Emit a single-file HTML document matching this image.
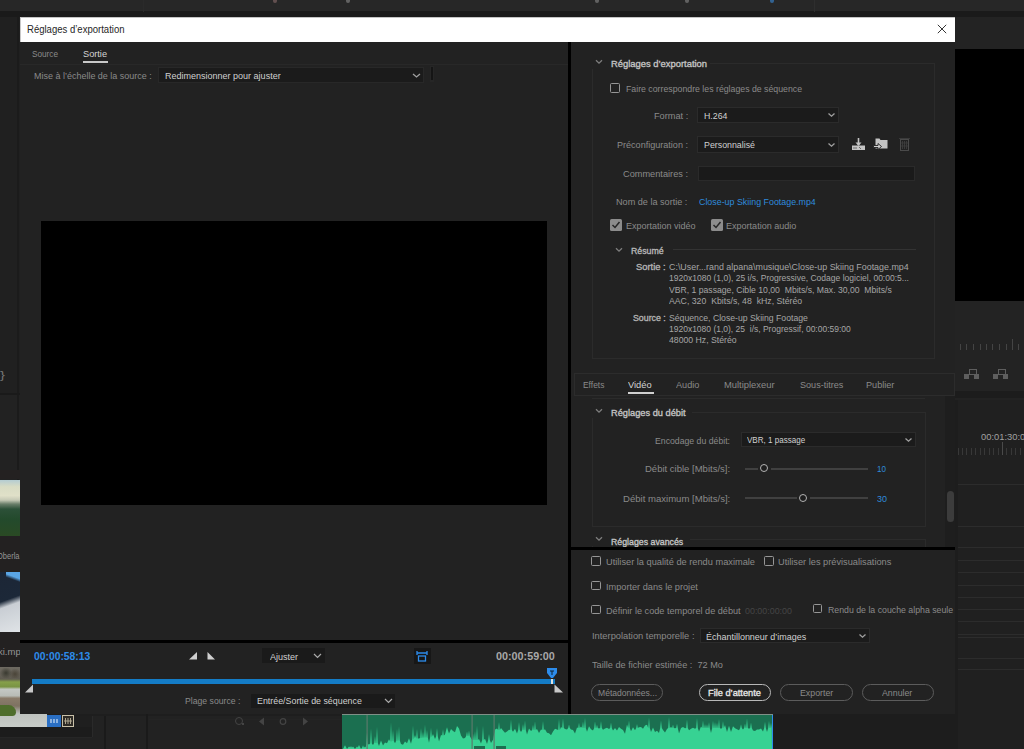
<!DOCTYPE html>
<html><head><meta charset="utf-8"><style>
html,body{margin:0;padding:0;width:1024px;height:749px;overflow:hidden;background:#222;}
body{position:relative;font-family:"Liberation Sans",sans-serif;}
body>div,body>svg{position:absolute;box-sizing:content-box;}
.t{white-space:pre;transform-origin:0 50%;}
</style></head><body>
<div style="left:0px;top:0px;width:1024px;height:749px;background:#222222;"></div>
<div style="left:0px;top:0px;width:1024px;height:11px;background:#272727;"></div>
<div style="left:0px;top:11px;width:1024px;height:6px;background:#1a1a1a;"></div>
<div style="left:143px;top:0px;width:1px;height:12px;background:#2a2a2a;"></div>
<div style="left:814px;top:0px;width:1px;height:12px;background:#2e2e2e;"></div>
<div style="left:273px;top:0;width:4px;height:3px;border-radius:0 0 2px 2px;background:#8a6a6a;opacity:.6"></div>
<div style="left:346px;top:0;width:4px;height:3px;border-radius:0 0 2px 2px;background:#8a8a8a;opacity:.6"></div>
<div style="left:595px;top:0;width:4px;height:3px;border-radius:0 0 2px 2px;background:#888;opacity:.6"></div>
<div style="left:685px;top:0;width:4px;height:3px;border-radius:0 0 2px 2px;background:#888;opacity:.6"></div>
<div style="left:770px;top:0;width:4px;height:3px;border-radius:0 0 2px 2px;background:#3a8ad8;opacity:.6"></div>
<div style="left:955px;top:17px;width:69px;height:32px;background:#232323;"></div>
<div style="left:955px;top:49px;width:69px;height:252px;background:#000000;"></div>
<div style="left:955px;top:301px;width:69px;height:91px;background:#232323;"></div>
<div style="left:955px;top:391px;width:69px;height:7px;background:#1c1c1c;"></div>
<div style="left:955px;top:400px;width:69px;height:349px;background:#202020;"></div>
<div style="left:960px;top:344px;width:1px;height:6px;background:#444444;"></div>
<div style="left:966px;top:344px;width:1px;height:6px;background:#444444;"></div>
<div style="left:973px;top:344px;width:1px;height:6px;background:#444444;"></div>
<div style="left:980px;top:344px;width:1px;height:6px;background:#444444;"></div>
<div style="left:986px;top:344px;width:1px;height:6px;background:#444444;"></div>
<div style="left:992px;top:344px;width:1px;height:6px;background:#444444;"></div>
<div style="left:999px;top:344px;width:1px;height:6px;background:#444444;"></div>
<div style="left:1006px;top:344px;width:1px;height:6px;background:#444444;"></div>
<div style="left:1012px;top:339px;width:1px;height:11px;background:#444444;"></div>
<div style="left:1018px;top:344px;width:1px;height:6px;background:#444444;"></div>
<div style="left:964px;top:369px;width:16px;height:10px;"><div style="position:absolute;left:5px;top:0;width:6px;height:4px;border:1px solid #5e5e5e"></div><div style="position:absolute;left:0;top:5px;width:5px;height:5px;background:#5e5e5e"></div><div style="position:absolute;left:10px;top:5px;width:5px;height:5px;background:#5e5e5e"></div></div>
<div style="left:993px;top:369px;width:16px;height:10px;"><div style="position:absolute;left:5px;top:0;width:6px;height:4px;border:1px solid #5e5e5e"></div><div style="position:absolute;left:0;top:5px;width:5px;height:5px;background:#5e5e5e"></div><div style="position:absolute;left:10px;top:5px;width:5px;height:5px;background:#5e5e5e"></div></div>
<div class="t" style="left:980.5px;top:429.6px;line-height:14px;font-size:9px;font-weight:400;color:#a0a0a0;transform:scaleX(1.041);">00:01:30:00</div>
<div style="left:958px;top:448px;width:1px;height:7px;background:#383838;"></div>
<div style="left:962px;top:448px;width:1px;height:7px;background:#383838;"></div>
<div style="left:966px;top:448px;width:1px;height:7px;background:#383838;"></div>
<div style="left:971px;top:448px;width:1px;height:7px;background:#383838;"></div>
<div style="left:975px;top:448px;width:1px;height:7px;background:#383838;"></div>
<div style="left:980px;top:448px;width:1px;height:7px;background:#383838;"></div>
<div style="left:984px;top:448px;width:1px;height:7px;background:#383838;"></div>
<div style="left:989px;top:448px;width:1px;height:7px;background:#383838;"></div>
<div style="left:993px;top:448px;width:1px;height:7px;background:#383838;"></div>
<div style="left:998px;top:448px;width:1px;height:7px;background:#383838;"></div>
<div style="left:1002px;top:442px;width:1px;height:13px;background:#4a4a4a;"></div>
<div style="left:1006px;top:448px;width:1px;height:7px;background:#383838;"></div>
<div style="left:1011px;top:448px;width:1px;height:7px;background:#383838;"></div>
<div style="left:1015px;top:448px;width:1px;height:7px;background:#383838;"></div>
<div style="left:1020px;top:448px;width:1px;height:7px;background:#383838;"></div>
<div style="left:1024px;top:448px;width:1px;height:7px;background:#383838;"></div>
<div style="left:958px;top:484px;width:66px;height:1px;background:#2c2c2c;"></div>
<div style="left:958px;top:526px;width:66px;height:1px;background:#2c2c2c;"></div>
<div style="left:958px;top:547px;width:66px;height:1px;background:#2c2c2c;"></div>
<div style="left:958px;top:560px;width:66px;height:1px;background:#2c2c2c;"></div>
<div style="left:958px;top:572px;width:66px;height:1px;background:#2c2c2c;"></div>
<div style="left:958px;top:585px;width:66px;height:1px;background:#2c2c2c;"></div>
<div style="left:958px;top:597px;width:66px;height:1px;background:#2c2c2c;"></div>
<div style="left:958px;top:609px;width:66px;height:1px;background:#2c2c2c;"></div>
<div style="left:958px;top:621px;width:66px;height:1px;background:#2c2c2c;"></div>
<div style="left:958px;top:634px;width:66px;height:1px;background:#2c2c2c;"></div>
<div style="left:958px;top:637px;width:66px;height:1px;background:#2c2c2c;"></div>
<div style="left:958px;top:658px;width:66px;height:1px;background:#2c2c2c;"></div>
<div style="left:958px;top:669px;width:66px;height:1px;background:#2c2c2c;"></div>
<div style="left:955px;top:400px;width:3px;height:349px;background:#1d1d1d;"></div>
<div style="left:0px;top:17px;width:20px;height:376px;background:#202020;"></div>
<div style="left:17px;top:17px;width:2px;height:697px;background:#1b1b1b;"></div>
<div style="left:0px;top:393px;width:20px;height:2px;background:#1a1a1a;"></div>
<div class="t" style="left:0.0px;top:368.9px;line-height:14px;font-size:10px;font-weight:400;color:#777;transform:scaleX(1.495);">}</div>
<div style="left:0px;top:470px;width:20px;height:9px;background:#242121;"></div>
<div style="left:0;top:480px;width:20px;height:56px;background:linear-gradient(180deg,#b4ccd2 0%,#d8dcc4 12%,#e0e0c8 28%,#c4c8b4 36%,#6a7e6a 43%,#2c5038 52%,#234a2c 70%,#2a4a24 100%)"></div>
<div style="left:0px;top:536px;width:20px;height:36px;background:#232121;"></div>
<div class="t" style="left:-3.0px;top:549.0px;line-height:14px;font-size:9px;font-weight:400;color:#959595;transform:scaleX(0.833);">Oberla</div>
<div style="left:0;top:572px;width:20px;height:60px;background:linear-gradient(160deg,#1c2636 0%,#1c2838 45%,#c9ced4 55%,#dfe3e6 100%)"><div style="position:absolute;left:6px;top:0;width:14px;height:12px;background:linear-gradient(200deg,#5aa6e6 40%,transparent 60%)"></div></div>
<div style="left:0px;top:632px;width:20px;height:35px;background:#232121;"></div>
<div class="t" style="left:-2.0px;top:644.5px;line-height:14px;font-size:9px;font-weight:400;color:#959595;transform:scaleX(1.056);">ki.mp4</div>
<div style="left:20px;top:714px;width:323px;height:35px;background:#222222;"></div>
<div style="left:20px;top:714px;width:72px;height:22px;background:#1f1f1f;"></div>
<div style="left:92px;top:714px;width:1px;height:22px;background:#2a2a2a;"></div>
<div style="left:20px;top:736px;width:73px;height:1px;background:#2a2a2a;"></div>
<div style="left:104px;top:714px;width:2px;height:35px;background:#1a1a1a;"></div>
<div style="left:149px;top:719px;width:194px;height:1px;background:#242424;"></div>
<div style="left:20px;top:714px;width:935px;height:2px;background:#1e1e1e;"></div>
<div style="left:146px;top:714px;width:2px;height:35px;background:#1a1a1a;"></div>
<div style="left:0;top:667px;width:47px;height:60px;background:linear-gradient(180deg,#6e6a62 0%,#5e5a50 20%,#86a04a 25%,#7a9444 33%,#c4c8c4 37%,#b8bcb6 48%,#8a7c6a 52%,#7e7262 65%,#bfc3bf 78%,#c8ccc8 100%)"></div>
<div style="left:0;top:668px;width:20px;height:10px;background:radial-gradient(circle at 30% 50%,#3a3a30 0%,transparent 40%),radial-gradient(circle at 75% 60%,#4a4438 0%,transparent 35%)"></div>
<div style="left:0;top:705px;width:16px;height:11px;background:#4f6e2c;border-radius:0 8px 4px 0"></div>
<div style="left:47px;top:715px;width:14px;height:12px;background:#2a6fc4;"></div>
<svg style="position:absolute;left:47px;top:715px" width="28" height="12"><path d="M4 4 L4 8 M7 4 L7 8 M10 4 L10 8" stroke="#cfe0f4" stroke-width="1.2"/><rect x="15.5" y="0.5" width="11" height="11" fill="#2e2b26" stroke="#c8c0a8"/><path d="M18.5 3 L18.5 9 M21 3 L21 9 M23.5 3 L23.5 9 M17 6 L25 6" stroke="#b0a890" stroke-width="1"/></svg>
<div style="left:0px;top:727px;width:92px;height:10px;background:#1c1c1c;"></div>
<div style="left:0px;top:737px;width:92px;height:12px;background:#222222;"></div>
<div style="left:0px;top:737px;width:92px;height:1px;background:#262626;"></div>
<div style="left:234.5px;top:717px;width:6px;height:6px;border:1.3px solid #444;border-radius:50%"></div>
<div style="left:242px;top:723px;width:2px;height:2px;background:#444;"></div>
<svg style="position:absolute;left:255px;top:716px" width="60" height="10"><path d="M9 1.5 L4 5.5 L9 9.5Z" fill="#444"/><circle cx="28" cy="5.5" r="2.8" fill="none" stroke="#444" stroke-width="1.2"/><path d="M48 1.5 L53 5.5 L48 9.5Z" fill="#444"/></svg>
<div style="left:342px;top:714px;width:431px;height:35px;background:#1b6f50;border-top:1px solid #7f9088"></div>
<svg style="position:absolute;left:0;top:0" width="1024" height="749"><path d="M343 749 L343.0 749.0 L345.0 745.3 L347.0 749.0 L349.0 746.4 L350.2 747.5 L351.0 746.0 L351.8 747.5 L352.2 747.5 L353.0 746.6 L353.8 747.5 L355.0 749.0 L356.2 747.5 L357.0 746.4 L357.8 747.5 L359.0 745.0 L361.0 749.0 L362.2 747.5 L363.0 745.2 L363.8 747.5 L364.2 747.5 L365.0 746.5 L365.8 747.5 L366.2 744.0 L367.0 732.6 L367.8 744.0 L369.0 744.6 L370.2 743.6 L371.0 728.3 L371.8 743.6 L373.0 745.1 L374.2 743.1 L375.0 735.9 L375.8 743.1 L376.2 742.9 L377.0 726.7 L377.8 742.9 L379.0 745.9 L381.0 740.6 L383.0 745.4 L385.0 742.5 L387.0 743.2 L389.0 739.3 L390.2 741.4 L391.0 722.3 L391.8 741.4 L392.2 741.1 L393.0 729.8 L393.8 741.1 L395.0 743.2 L396.2 740.7 L397.0 728.7 L397.8 740.7 L398.2 740.5 L399.0 726.3 L399.8 740.5 L401.0 743.9 L403.0 744.8 L405.0 741.6 L407.0 743.3 L409.0 738.3 L411.0 743.8 L412.2 738.9 L413.0 725.5 L413.8 738.9 L415.0 735.0 L416.2 738.5 L417.0 729.1 L417.8 738.5 L419.0 738.4 L420.2 738.1 L421.0 728.1 L421.8 738.1 L422.2 737.8 L423.0 731.8 L423.8 737.8 L424.2 737.6 L425.0 724.5 L425.8 737.6 L426.2 737.4 L427.0 730.1 L427.8 737.4 L429.0 742.7 L430.2 737.0 L431.0 727.8 L431.8 737.0 L433.0 734.0 L435.0 739.0 L436.2 736.3 L437.0 727.9 L437.8 736.3 L439.0 741.6 L441.0 735.1 L442.2 735.6 L443.0 729.3 L443.8 735.6 L445.0 734.4 L446.2 730.0 L447.0 727.3 L447.8 730.0 L449.0 733.5 L451.0 729.0 L453.0 730.9 L455.0 732.2 L457.0 726.0 L459.0 728.6 L461.0 735.4 L463.0 738.4 L465.0 737.9 L466.2 736.0 L467.0 731.5 L467.8 736.0 L468.2 736.0 L469.0 730.6 L469.8 736.0 L471.0 738.2 L472.2 740.0 L473.0 733.5 L473.8 740.0 L474.2 740.0 L475.0 731.1 L475.8 740.0 L476.2 740.0 L477.0 725.4 L477.8 740.0 L479.0 739.1 L481.0 743.5 L482.2 740.0 L483.0 725.7 L483.8 740.0 L485.0 738.8 L487.0 743.9 L488.2 740.0 L489.0 734.1 L489.8 740.0 L491.0 743.1 L493.0 739.8 L495.0 729.6 L497.0 728.5 L498.2 730.0 L499.0 722.0 L499.8 730.0 L501.0 728.0 L503.0 730.5 L505.0 732.7 L507.0 731.5 L509.0 729.7 L510.2 730.0 L511.0 719.6 L511.8 730.0 L513.0 731.8 L515.0 728.7 L517.0 733.5 L518.2 730.0 L519.0 722.1 L519.8 730.0 L521.0 732.1 L522.2 730.0 L523.0 724.1 L523.8 730.0 L524.2 730.0 L525.0 720.6 L525.8 730.0 L527.0 734.4 L529.0 728.5 L531.0 730.9 L532.2 730.0 L533.0 724.7 L533.8 730.0 L534.2 730.0 L535.0 721.2 L535.8 730.0 L537.0 728.9 L539.0 732.9 L541.0 729.6 L542.2 730.0 L543.0 720.9 L543.8 730.0 L545.0 729.3 L547.0 732.7 L549.0 733.3 L551.0 735.2 L553.0 731.6 L555.0 728.8 L557.0 729.5 L558.2 730.0 L559.0 718.8 L559.8 730.0 L561.0 727.1 L562.2 728.0 L563.0 718.3 L563.8 728.0 L565.0 729.0 L567.0 729.6 L568.2 728.0 L569.0 724.6 L569.8 728.0 L571.0 729.4 L573.0 730.0 L575.0 733.5 L577.0 727.6 L578.2 728.0 L579.0 722.8 L579.8 728.0 L581.0 726.5 L582.2 728.0 L583.0 721.5 L583.8 728.0 L584.2 728.0 L585.0 717.7 L585.8 728.0 L587.0 731.8 L589.0 726.3 L591.0 729.2 L593.0 730.4 L594.2 728.0 L595.0 721.3 L595.8 728.0 L596.2 728.0 L597.0 724.7 L597.8 728.0 L599.0 728.5 L600.2 728.0 L601.0 721.1 L601.8 728.0 L603.0 729.7 L605.0 728.6 L607.0 727.8 L609.0 728.9 L610.2 728.0 L611.0 722.6 L611.8 728.0 L613.0 730.6 L615.0 728.1 L617.0 730.6 L619.0 727.0 L621.0 728.8 L623.0 730.1 L625.0 733.8 L627.0 724.6 L628.2 728.0 L629.0 720.4 L629.8 728.0 L631.0 731.3 L633.0 727.3 L635.0 730.3 L636.2 728.0 L637.0 724.1 L637.8 728.0 L639.0 727.2 L641.0 727.1 L643.0 728.7 L645.0 725.4 L647.0 724.8 L648.2 728.0 L649.0 717.4 L649.8 728.0 L651.0 731.9 L653.0 727.4 L655.0 732.1 L657.0 730.8 L659.0 732.9 L660.2 728.0 L661.0 720.4 L661.8 728.0 L663.0 730.1 L665.0 732.5 L667.0 729.0 L668.2 728.0 L669.0 717.1 L669.8 728.0 L671.0 727.1 L672.2 728.0 L673.0 724.4 L673.8 728.0 L675.0 728.2 L676.2 728.0 L677.0 723.7 L677.8 728.0 L679.0 733.6 L681.0 728.1 L683.0 726.9 L685.0 728.3 L686.2 728.0 L687.0 719.4 L687.8 728.0 L689.0 730.3 L691.0 728.8 L693.0 727.7 L695.0 728.8 L696.2 728.0 L697.0 718.1 L697.8 728.0 L699.0 731.4 L701.0 726.6 L702.2 728.0 L703.0 720.6 L703.8 728.0 L704.2 728.0 L705.0 723.9 L705.8 728.0 L706.2 728.0 L707.0 724.3 L707.8 728.0 L708.2 728.0 L709.0 722.3 L709.8 728.0 L711.0 733.0 L712.2 728.0 L713.0 720.8 L713.8 728.0 L714.2 728.0 L715.0 722.0 L715.8 728.0 L716.2 728.0 L717.0 722.8 L717.8 728.0 L718.2 728.0 L719.0 719.1 L719.8 728.0 L721.0 728.7 L722.2 728.0 L723.0 721.0 L723.8 728.0 L725.0 725.1 L727.0 732.0 L729.0 725.7 L731.0 732.0 L733.0 726.2 L735.0 728.2 L737.0 729.3 L739.0 730.2 L740.2 728.0 L741.0 724.2 L741.8 728.0 L743.0 729.5 L744.2 728.0 L745.0 723.4 L745.8 728.0 L746.2 728.0 L747.0 718.2 L747.8 728.0 L749.0 728.8 L750.2 728.0 L751.0 722.4 L751.8 728.0 L753.0 730.6 L755.0 731.1 L757.0 729.4 L759.0 729.4 L761.0 728.4 L763.0 731.4 L764.2 728.0 L765.0 721.8 L765.8 728.0 L767.0 732.0 L768.2 728.0 L769.0 720.8 L769.8 728.0 L770.2 728.0 L771.0 722.7 L771.8 728.0 L772 749Z" fill="#37d293"/><rect x="366.5" y="715" width="1.2" height="34" fill="#5a7a6a"/><rect x="471.5" y="715" width="1.2" height="34" fill="#5a7a6a"/><rect x="493.5" y="715" width="1.2" height="34" fill="#5a7a6a"/><rect x="474" y="746" width="11" height="3" fill="#1b6f50"/><rect x="496" y="746" width="10" height="3" fill="#1b6f50"/></svg>
<div style="left:773px;top:714px;width:182px;height:35px;background:#1d1d1d;"></div>
<div style="left:772px;top:715px;width:1px;height:34px;background:#2d8ceb;"></div>
<div style="left:20px;top:17px;width:935px;height:697px;background:#232323;"></div>
<div style="left:20px;top:17px;width:935px;height:25px;background:#ffffff;"></div>
<div class="t" style="left:27.0px;top:21.9px;line-height:14px;font-size:10.5px;font-weight:400;color:#262626;transform:scaleX(0.908);">Réglages d’exportation</div>
<div style="left:20px;top:17px;width:935px;height:1px;background:#c4c4c4;"></div>
<div style="left:20px;top:17px;width:1px;height:25px;background:#c8c8c8;"></div>
<svg style="position:absolute;left:937px;top:24px" width="10" height="10"><path d="M0.8 0.8 L9.2 9.2 M9.2 0.8 L0.8 9.2" stroke="#2a2a2a" stroke-width="0.95"/></svg>
<div style="left:20px;top:42px;width:548px;height:672px;background:#222222;"></div>
<div class="t" style="left:32.0px;top:47.1px;line-height:14px;font-size:9.5px;font-weight:400;color:#8a8a8a;transform:scaleX(0.864);">Source</div>
<div class="t" style="left:83.0px;top:47.1px;line-height:14px;font-size:9.5px;font-weight:400;color:#d4d4d4;transform:scaleX(0.967);">Sortie</div>
<div style="left:83px;top:61px;width:25px;height:2px;background:#c8c8c8;"></div>
<div style="left:20px;top:64px;width:548px;height:1px;background:#282828;"></div>
<div class="t" style="left:33.6px;top:69.2px;line-height:14px;font-size:9.5px;font-weight:400;color:#8a8a8a;transform:scaleX(0.945);">Mise à l’échelle de la source :</div>
<div style="left:158px;top:67px;width:264px;height:14px;background:#1b1b1b;border:1px solid #282828"></div>
<div class="t" style="left:165.0px;top:69.2px;line-height:14px;font-size:9.5px;font-weight:400;color:#d0d0d0;transform:scaleX(0.948);">Redimensionner pour ajuster</div>
<svg style="position:absolute;left:412px;top:72.5px" width="9" height="6"><path d="M1 1 L4.5 4 L8 1" stroke="#a0a0a0" fill="none" stroke-width="1.3"/></svg>
<div style="left:430px;top:66px;width:4px;height:16px;background:#262626;"></div>
<div style="left:431px;top:67px;width:2px;height:13px;background:#151515;"></div>
<div style="left:41px;top:221px;width:506px;height:284px;background:#000000;"></div>
<div style="left:20px;top:640px;width:548px;height:3px;background:#000000;"></div>
<div class="t" style="left:34.2px;top:648.8px;line-height:14px;font-size:10.5px;font-weight:700;color:#2d8ceb;transform:scaleX(0.984);">00:00:58:13</div>
<svg style="position:absolute;left:188px;top:651px" width="30" height="10"><path d="M1 8.5 L9 8.5 L9 1Z" fill="#cfcfcf"/><path d="M19.5 1 L19.5 8.5 L27 8.5Z" fill="#cfcfcf"/></svg>
<div style="left:262px;top:648px;width:63px;height:15px;background:#1a1a1a;"></div>
<div class="t" style="left:269.5px;top:649.5px;line-height:14px;font-size:9.5px;font-weight:400;color:#d0d0d0;transform:scaleX(0.950);">Ajuster</div>
<svg style="position:absolute;left:313px;top:653px" width="9" height="6"><path d="M1 1 L4.5 4.5 L8 1" stroke="#aaa" fill="none" stroke-width="1.2"/></svg>
<div style="left:414px;top:648px;width:17px;height:16px;background:#171717"><svg style="position:absolute;left:0;top:0" width="16" height="16"><path d="M3 3 L3 7 M13 3 L13 7 M3 5 L13 5" stroke="#2d8ceb" stroke-width="1.3" fill="none"/><rect x="4.5" y="8" width="7" height="5" stroke="#2d8ceb" stroke-width="1.3" fill="none"/></svg></div>
<div class="t" style="left:496.4px;top:648.8px;line-height:14px;font-size:10.5px;font-weight:700;color:#a8a8a8;transform:scaleX(1.028);">00:00:59:00</div>
<div style="left:32px;top:679px;width:523px;height:5px;background:#147cc6;"></div>
<svg style="position:absolute;left:24px;top:684px" width="10" height="9"><path d="M1 8.5 L9 8.5 L9 0.5Z" fill="#c8c8c8"/></svg>
<svg style="position:absolute;left:554px;top:684px" width="10" height="9"><path d="M0.5 0.5 L0.5 8.5 L9 8.5Z" fill="#c8c8c8"/></svg>
<svg style="position:absolute;left:546px;top:667px" width="12" height="18"><path d="M1 1 L11 1 L11 6 L7 11 L5 11 L1 6Z" fill="#2d8ceb"/><path d="M4 4 L8 4 M6 4 L6 8" stroke="#123" stroke-width="1"/><rect x="5" y="12" width="2" height="5" fill="#e0e0e0"/></svg>
<div class="t" style="left:184.6px;top:694.2px;line-height:14px;font-size:9.5px;font-weight:400;color:#8a8a8a;transform:scaleX(0.912);">Plage source :</div>
<div style="left:251px;top:694px;width:144px;height:14px;background:#1a1a1a;"></div>
<div class="t" style="left:256.6px;top:694.2px;line-height:14px;font-size:9.5px;font-weight:400;color:#d0d0d0;transform:scaleX(0.932);">Entrée/Sortie de séquence</div>
<svg style="position:absolute;left:384px;top:698px" width="9" height="6"><path d="M1 1 L4.5 4.5 L8 1" stroke="#aaa" fill="none" stroke-width="1.2"/></svg>
<div style="left:568px;top:42px;width:3px;height:672px;background:#000000;"></div>
<div style="left:571px;top:42px;width:384px;height:331px;background:#222222;"></div>
<div style="left:592px;top:63px;width:341px;height:294px;border:1px solid #2b2b2b"></div>
<div style="left:591px;top:56px;width:119px;height:13px;background:#222222;"></div>
<svg style="position:absolute;left:594px;top:59px" width="10" height="6"><path d="M2 1.3 L5 4.2 L8 1.3" stroke="#7e7e7e" fill="none" stroke-width="1.3"/></svg>
<div class="t" style="left:611.0px;top:56.8px;line-height:14px;font-size:9.5px;font-weight:400;color:#c4c4c4;transform:scaleX(0.988);-webkit-text-stroke:0.35px #c4c4c4;">Réglages d’exportation</div>
<div style="left:610px;top:83px;width:7.6px;height:7.6px;border:1.8px solid #969696;border-radius:1.5px"></div>
<div class="t" style="left:626.0px;top:82.0px;line-height:14px;font-size:9.5px;font-weight:400;color:#8a8a8a;transform:scaleX(0.921);">Faire correspondre les réglages de séquence</div>
<div class="t" style="left:653.8px;top:109.0px;line-height:14px;font-size:9.5px;font-weight:400;color:#8a8a8a;transform:scaleX(0.968);">Format :</div>
<div style="left:697px;top:107px;width:140px;height:14px;background:#1b1b1b;border:1px solid #2b2b2b"></div>
<div class="t" style="left:703.6px;top:109.0px;line-height:14px;font-size:9.5px;font-weight:400;color:#d0d0d0;transform:scaleX(0.923);">H.264</div>
<svg style="position:absolute;left:827px;top:112.0px" width="9" height="6"><path d="M1.5 1.5 L4.5 4.2 L7.5 1.5" stroke="#a0a0a0" fill="none" stroke-width="1.3"/></svg>
<div class="t" style="left:617.0px;top:138.4px;line-height:14px;font-size:9.5px;font-weight:400;color:#8a8a8a;transform:scaleX(0.953);">Préconfiguration :</div>
<div style="left:697px;top:136px;width:140px;height:15px;background:#1b1b1b;border:1px solid #2b2b2b"></div>
<div class="t" style="left:703.5px;top:138.4px;line-height:14px;font-size:9.5px;font-weight:400;color:#d0d0d0;transform:scaleX(0.929);">Personnalisé</div>
<svg style="position:absolute;left:827px;top:141.5px" width="9" height="6"><path d="M1.5 1.5 L4.5 4.2 L7.5 1.5" stroke="#a0a0a0" fill="none" stroke-width="1.3"/></svg>
<svg style="position:absolute;left:851px;top:137px" width="62" height="15"><path d="M7.5 1 L7.5 8" stroke="#c4c4c4" stroke-width="1.6"/><path d="M4.5 5.5 L7.5 9 L10.5 5.5Z" fill="#c4c4c4"/><rect x="1" y="8.5" width="13" height="4.5" fill="#c4c4c4"/><path d="M3 10 L3 12 M5 10 L5 12 M8 10 L10 12" stroke="#555" stroke-width="0.8"/><path d="M24.5 1.5 L28.5 1.5 L29.5 3 L36.5 3 L36.5 11.5 L24.5 11.5Z" fill="#c4c4c4"/><path d="M22.5 8.5 L27 8.5 L27 6.5 L30.5 9.5 L27 12.5 L27 10.5 L22.5 10.5Z" fill="#d0d0d0" stroke="#222" stroke-width="0.9"/><rect x="49.5" y="2.5" width="8" height="11" fill="none" stroke="#4a4a4a"/><path d="M48 1.5 L59 1.5 M51.5 4 L51.5 12 M53.5 4 L53.5 12 M55.5 4 L55.5 12 M50 6 L57 6 M50 9 L57 9" stroke="#404040" stroke-width="0.8"/></svg>
<div class="t" style="left:623.0px;top:167.4px;line-height:14px;font-size:9.5px;font-weight:400;color:#8a8a8a;transform:scaleX(0.969);">Commentaires :</div>
<div style="left:698px;top:166px;width:215px;height:13px;background:#1a1a1a;border:1px solid #2a2a2a"></div>
<div class="t" style="left:615.6px;top:194.8px;line-height:14px;font-size:9.5px;font-weight:400;color:#8a8a8a;transform:scaleX(0.959);">Nom de la sortie :</div>
<div class="t" style="left:699.0px;top:194.8px;line-height:14px;font-size:9.5px;font-weight:400;color:#2f8bdc;transform:scaleX(0.933);">Close-up Skiing Footage.mp4</div>
<div style="left:610px;top:219px;width:12px;height:12px;background:#8c8c8c;border-radius:1.5px"><svg style="position:absolute;left:0;top:0" width="12" height="12"><path d="M2.5 6 L5 8.5 L9.5 3" stroke="#262626" stroke-width="1.5" fill="none"/></svg></div>
<div class="t" style="left:625.9px;top:218.9px;line-height:14px;font-size:9.5px;font-weight:400;color:#8a8a8a;transform:scaleX(0.948);">Exportation vidéo</div>
<div style="left:710.5px;top:219px;width:12px;height:12px;background:#8c8c8c;border-radius:1.5px"><svg style="position:absolute;left:0;top:0" width="12" height="12"><path d="M2.5 6 L5 8.5 L9.5 3" stroke="#262626" stroke-width="1.5" fill="none"/></svg></div>
<div class="t" style="left:725.5px;top:218.9px;line-height:14px;font-size:9.5px;font-weight:400;color:#8a8a8a;transform:scaleX(0.951);">Exportation audio</div>
<svg style="position:absolute;left:614px;top:247px" width="10" height="6"><path d="M2 1.3 L5 4.2 L8 1.3" stroke="#7e7e7e" fill="none" stroke-width="1.3"/></svg>
<div class="t" style="left:631.0px;top:244.3px;line-height:14px;font-size:9.5px;font-weight:400;color:#b8b8b8;transform:scaleX(0.924);-webkit-text-stroke:0.35px #b8b8b8;">Résumé</div>
<div style="left:673px;top:249px;width:243px;height:1px;background:#333333;"></div>
<div class="t" style="left:635.6px;top:259.8px;line-height:14px;font-size:9.5px;font-weight:400;color:#b4b4b4;transform:scaleX(0.986);-webkit-text-stroke:0.35px #b4b4b4;">Sortie :</div>
<div class="t" style="left:669.2px;top:259.8px;line-height:14px;font-size:9.5px;font-weight:400;color:#a6a6a6;transform:scaleX(0.936);">C:\User...rand alpana\musique\Close-up Skiing Footage.mp4</div>
<div class="t" style="left:669.2px;top:271.3px;line-height:14px;font-size:9.5px;font-weight:400;color:#a6a6a6;transform:scaleX(0.896);">1920x1080 (1,0), 25 i/s, Progressive, Codage logiciel, 00:00:5...</div>
<div class="t" style="left:669.2px;top:282.6px;line-height:14px;font-size:9.5px;font-weight:400;color:#a6a6a6;transform:scaleX(0.909);">VBR, 1 passage, Cible 10,00  Mbits/s, Max. 30,00  Mbits/s</div>
<div class="t" style="left:669.2px;top:294.1px;line-height:14px;font-size:9.5px;font-weight:400;color:#a6a6a6;transform:scaleX(0.917);">AAC, 320  Kbits/s, 48  kHz, Stéréo</div>
<div class="t" style="left:632.5px;top:310.6px;line-height:14px;font-size:9.5px;font-weight:400;color:#b4b4b4;transform:scaleX(0.927);-webkit-text-stroke:0.35px #b4b4b4;">Source :</div>
<div class="t" style="left:669.2px;top:310.6px;line-height:14px;font-size:9.5px;font-weight:400;color:#a6a6a6;transform:scaleX(0.913);">Séquence, Close-up Skiing Footage</div>
<div class="t" style="left:669.2px;top:321.8px;line-height:14px;font-size:9.5px;font-weight:400;color:#a6a6a6;transform:scaleX(0.894);">1920x1080 (1,0), 25  i/s, Progressif, 00:00:59:00</div>
<div class="t" style="left:669.2px;top:332.8px;line-height:14px;font-size:9.5px;font-weight:400;color:#a6a6a6;transform:scaleX(0.914);">48000 Hz, Stéréo</div>
<div style="left:574px;top:373px;width:379px;height:21px;border:1px solid #2c2c2c;background:#222"></div>
<div class="t" style="left:582.6px;top:378.3px;line-height:14px;font-size:9.5px;font-weight:400;color:#8a8a8a;transform:scaleX(0.887);">Effets</div>
<div class="t" style="left:628.0px;top:378.3px;line-height:14px;font-size:9.5px;font-weight:400;color:#d4d4d4;transform:scaleX(0.978);">Vidéo</div>
<div class="t" style="left:676.4px;top:378.3px;line-height:14px;font-size:9.5px;font-weight:400;color:#8a8a8a;transform:scaleX(0.962);">Audio</div>
<div class="t" style="left:724.0px;top:378.3px;line-height:14px;font-size:9.5px;font-weight:400;color:#8a8a8a;transform:scaleX(0.988);">Multiplexeur</div>
<div class="t" style="left:799.6px;top:378.3px;line-height:14px;font-size:9.5px;font-weight:400;color:#8a8a8a;transform:scaleX(0.956);">Sous-titres</div>
<div class="t" style="left:866.4px;top:378.3px;line-height:14px;font-size:9.5px;font-weight:400;color:#8a8a8a;transform:scaleX(0.960);">Publier</div>
<div style="left:628px;top:392px;width:26px;height:2px;background:#d0d0d0;"></div>
<div style="left:571px;top:396px;width:384px;height:151px;background:#222222;"></div>
<div style="left:592px;top:398px;width:333px;height:1px;background:#2b2b2b;"></div>
<div style="left:592px;top:412px;width:332px;height:113px;border:1px solid #2b2b2b"></div>
<div style="left:591px;top:405px;width:101px;height:13px;background:#222222;"></div>
<svg style="position:absolute;left:594px;top:408px" width="10" height="6"><path d="M2 1.3 L5 4.2 L8 1.3" stroke="#7e7e7e" fill="none" stroke-width="1.3"/></svg>
<div class="t" style="left:611.4px;top:405.9px;line-height:14px;font-size:9.5px;font-weight:400;color:#c4c4c4;transform:scaleX(0.974);-webkit-text-stroke:0.35px #c4c4c4;">Réglages du débit</div>
<div class="t" style="left:655.0px;top:433.9px;line-height:14px;font-size:9.5px;font-weight:400;color:#8a8a8a;transform:scaleX(0.916);">Encodage du débit:</div>
<div style="left:741px;top:432px;width:173px;height:13px;background:#1b1b1b;border:1px solid #2b2b2b"></div>
<div class="t" style="left:746.8px;top:433.4px;line-height:14px;font-size:9.5px;font-weight:400;color:#d0d0d0;transform:scaleX(0.848);">VBR, 1 passage</div>
<svg style="position:absolute;left:904px;top:436.5px" width="9" height="6"><path d="M1.5 1.5 L4.5 4.2 L7.5 1.5" stroke="#a0a0a0" fill="none" stroke-width="1.3"/></svg>
<div class="t" style="left:645.4px;top:462.3px;line-height:14px;font-size:9.5px;font-weight:400;color:#8a8a8a;transform:scaleX(1.001);">Débit cible [Mbits/s]:</div>
<div style="left:745px;top:468px;width:123px;height:2px;background:#404040;"></div>
<div style="left:758px;top:466px;width:13px;height:6px;background:#222222;"></div>
<div style="left:759.6px;top:464.3px;width:6px;height:6px;border:1.8px solid #b4b4b4;border-radius:50%;background:#1e1e1e"></div>
<div class="t" style="left:877.0px;top:462.1px;line-height:14px;font-size:9.5px;font-weight:400;color:#2f8bdc;transform:scaleX(0.851);">10</div>
<div class="t" style="left:623.2px;top:492.4px;line-height:14px;font-size:9.5px;font-weight:400;color:#8a8a8a;transform:scaleX(1.006);">Débit maximum [Mbits/s]:</div>
<div style="left:745px;top:497px;width:123px;height:2px;background:#404040;"></div>
<div style="left:797px;top:495px;width:13px;height:6px;background:#222222;"></div>
<div style="left:798.6px;top:493.6px;width:6px;height:6px;border:1.8px solid #b4b4b4;border-radius:50%;background:#1e1e1e"></div>
<div class="t" style="left:877.0px;top:492.1px;line-height:14px;font-size:9.5px;font-weight:400;color:#2f8bdc;transform:scaleX(0.945);">30</div>
<div style="left:592px;top:539px;width:332px;height:20px;border:1px solid #2b2b2b"></div>
<div style="left:591px;top:533px;width:99px;height:13px;background:#222222;"></div>
<svg style="position:absolute;left:594px;top:536px" width="10" height="6"><path d="M2 1.3 L5 4.2 L8 1.3" stroke="#7e7e7e" fill="none" stroke-width="1.3"/></svg>
<div class="t" style="left:611.4px;top:534.5px;line-height:14px;font-size:9.5px;font-weight:400;color:#c4c4c4;transform:scaleX(0.924);-webkit-text-stroke:0.35px #c4c4c4;">Réglages avancés</div>
<div style="left:945px;top:396px;width:10px;height:151px;background:#1e1e1e;"></div>
<div style="left:946.5px;top:491px;width:7px;height:31px;background:#3c3c3c;border-radius:4px"></div>
<div style="left:571px;top:547px;width:384px;height:3px;background:#000000;"></div>
<div style="left:571px;top:550px;width:384px;height:164px;background:#222222;"></div>
<div style="left:591px;top:556px;width:7.6px;height:7.6px;border:1.8px solid #969696;border-radius:1.5px"></div>
<div class="t" style="left:605.5px;top:555.4px;line-height:14px;font-size:9.5px;font-weight:400;color:#8a8a8a;transform:scaleX(0.973);">Utiliser la qualité de rendu maximale</div>
<div style="left:764px;top:556px;width:7.6px;height:7.6px;border:1.8px solid #969696;border-radius:1.5px"></div>
<div class="t" style="left:777.7px;top:555.4px;line-height:14px;font-size:9.5px;font-weight:400;color:#8a8a8a;transform:scaleX(0.971);">Utiliser les prévisualisations</div>
<div style="left:591px;top:580.5px;width:7.6px;height:7.6px;border:1.8px solid #969696;border-radius:1.5px"></div>
<div class="t" style="left:605.5px;top:579.8px;line-height:14px;font-size:9.5px;font-weight:400;color:#8a8a8a;transform:scaleX(0.966);">Importer dans le projet</div>
<div style="left:591px;top:604.5px;width:7.6px;height:7.6px;border:1.8px solid #969696;border-radius:1.5px"></div>
<div class="t" style="left:605.8px;top:603.6px;line-height:14px;font-size:9.5px;font-weight:400;color:#8a8a8a;transform:scaleX(0.962);">Définir le code temporel de début</div>
<div class="t" style="left:745.0px;top:603.6px;line-height:14px;font-size:9.5px;font-weight:400;color:#454545;transform:scaleX(0.936);">00:00:00:00</div>
<div style="left:812.5px;top:603.5px;width:7.6px;height:7.6px;border:1.8px solid #969696;border-radius:1.5px"></div>
<div class="t" style="left:827.5px;top:603.0px;line-height:14px;font-size:9.5px;font-weight:400;color:#8a8a8a;transform:scaleX(0.922);">Rendu de la couche alpha seule</div>
<div class="t" style="left:592.0px;top:629.4px;line-height:14px;font-size:9.5px;font-weight:400;color:#8a8a8a;transform:scaleX(0.980);">Interpolation temporelle :</div>
<div style="left:700px;top:628px;width:168px;height:13px;background:#1b1b1b;border:1px solid #2b2b2b"></div>
<div class="t" style="left:706.3px;top:629.5px;line-height:14px;font-size:9.5px;font-weight:400;color:#d0d0d0;transform:scaleX(0.944);">Échantillonneur d’images</div>
<svg style="position:absolute;left:858px;top:632.5px" width="9" height="6"><path d="M1.5 1.5 L4.5 4.2 L7.5 1.5" stroke="#a0a0a0" fill="none" stroke-width="1.3"/></svg>
<div class="t" style="left:592.0px;top:658.4px;line-height:14px;font-size:9.5px;font-weight:400;color:#8a8a8a;transform:scaleX(0.965);">Taille de fichier estimée :  72 Mo</div>
<div style="left:590.7px;top:683.5px;width:70.29999999999995px;height:15px;border:1.5px solid #5c5c5c;border-radius:9px"></div>
<div class="t" style="left:597.6px;top:686.2px;line-height:14px;font-size:9.5px;font-weight:400;color:#8a8a8a;transform:scaleX(0.901);">Métadonnées...</div>
<div style="left:698.5px;top:683.5px;width:70.29999999999995px;height:15px;border:1.5px solid #b8b8b8;border-radius:9px"></div>
<div class="t" style="left:708.3px;top:686.2px;line-height:14px;font-size:9.5px;font-weight:400;color:#e6e6e6;transform:scaleX(0.973);-webkit-text-stroke:0.35px #e6e6e6;">File d’attente</div>
<div style="left:779.8px;top:683.5px;width:71.20000000000005px;height:15px;border:1.5px solid #5c5c5c;border-radius:9px"></div>
<div class="t" style="left:799.7px;top:686.2px;line-height:14px;font-size:9.5px;font-weight:400;color:#8a8a8a;transform:scaleX(0.927);">Exporter</div>
<div style="left:861.8px;top:683.5px;width:70.20000000000005px;height:15px;border:1.5px solid #5c5c5c;border-radius:9px"></div>
<div class="t" style="left:882.3px;top:686.2px;line-height:14px;font-size:9.5px;font-weight:400;color:#8a8a8a;transform:scaleX(0.925);">Annuler</div>
</body></html>
